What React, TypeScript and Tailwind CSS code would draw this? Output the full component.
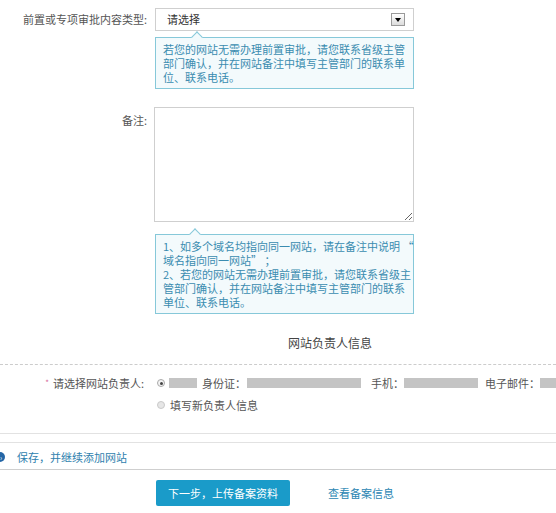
import React from "react";

const Tip = ({ lines, arrowLeft }: { lines: string[]; arrowLeft: string }) => (
  <div className="relative ml-[155px] w-[259px] border border-[#86c8d9] bg-[#f3fafc] pl-[7px] pr-[6px] pt-[4px] pb-[4px] text-[#3a8cb0] leading-[14px]">
    <span className={`absolute -top-[5px] ${arrowLeft} h-[8px] w-[8px] rotate-45 border-l border-t border-[#86c8d9] bg-[#f3fafc]`} />
    <p className="relative whitespace-nowrap">
      {lines.map((l, i) => (
        <React.Fragment key={i}>
          {i > 0 && <br />}
          {l}
        </React.Fragment>
      ))}
    </p>
  </div>
);

const Radio = ({ checked }: { checked?: boolean }) =>
  checked ? (
    <span className="flex h-[8px] w-[8px] items-center justify-center rounded-full border border-[#a9a9a9] bg-[#f4f4f4]">
      <span className="block h-[3px] w-[3px] rounded-full bg-[#444]" />
    </span>
  ) : (
    <span className="block h-[8px] w-[8px] rounded-full border border-[#c9c9c9] bg-[#e6e6e6]" />
  );

export default function App() {
  return (
    <div
      className="min-h-[513px] w-full overflow-hidden bg-white text-[11px] text-[#555]"
      style={{ fontFamily: '"Noto Sans CJK SC", "Liberation Sans", sans-serif' }}
    >
      {/* 前置审批类型 */}
      <div className="mt-[8px] flex">
        <div className="w-[147px] text-right leading-[23px]">前置或专项审批内容类型:</div>
        <div className="ml-[8px] flex h-[23px] w-[259px] items-center justify-between border border-[#cfcfcf] bg-white pl-[11px] pr-[8px]">
          <span className="text-[#333]">请选择</span>
          <span className="flex h-[13px] w-[14px] items-center justify-center border border-[#9a9a9a] bg-gradient-to-b from-white to-[#dcdcdc]">
            <span className="h-0 w-0 border-x-[3px] border-t-[4px] border-x-transparent border-t-black" />
          </span>
        </div>
      </div>

      <div className="mt-[6px]">
        <Tip
          arrowLeft="left-[37px]"
          lines={[
            "若您的网站无需办理前置审批，请您联系省级主管",
            "部门确认，并在网站备注中填写主管部门的联系单",
            "位、联系电话。",
          ]}
        />
      </div>

      {/* 备注 */}
      <div className="mt-[18px] flex">
        <div className="w-[147px] pt-[6px] text-right leading-[14px]">备注:</div>
        <textarea className="ml-[7px] h-[115px] w-[260px] border border-[#cfcfcf] bg-white outline-none" />
      </div>

      <div className="mt-[12px]">
        <Tip
          arrowLeft="left-[35px]"
          lines={[
            "1、如多个域名均指向同一网站，请在备注中说明 “",
            "域名指向同一网站” ；",
            "2、若您的网站无需办理前置审批，请您联系省级主",
            "管部门确认，并在网站备注中填写主管部门的联系",
            "单位、联系电话。",
          ]}
        />
      </div>

      {/* 网站负责人信息 */}
      <div className="mt-[21px] pl-[288px] text-[12px] leading-[16px] text-[#444]">网站负责人信息</div>
      <div className="mt-[13px] border-t border-dashed border-[#cccccc]" />

      <div className="mt-[10px] flex items-center whitespace-nowrap leading-[16px]">
        <div className="flex w-[144px] shrink-0 items-center justify-end">
          <span className="mr-[4px] text-[8px] text-[#d4679a]">*</span>
          请选择网站负责人:
        </div>
        <span className="ml-[13px] shrink-0">
          <Radio checked />
        </span>
        <span className="ml-[4px] h-[10px] w-[28px] shrink-0 bg-[#c4c4c4]" />
        <span className="ml-[5px] shrink-0">身份证：</span>
        <span className="ml-[1px] h-[10px] w-[114px] shrink-0 bg-[#c4c4c4]" />
        <span className="ml-[10px] shrink-0">手机：</span>
        <span className="h-[10px] w-[74px] shrink-0 bg-[#c4c4c4]" />
        <span className="ml-[7px] shrink-0">电子邮件：</span>
        <span className="h-[10px] w-[40px] shrink-0 bg-[#c4c4c4]" />
      </div>

      <div className="mt-[6px] flex items-center leading-[16px]">
        <span className="ml-[157px]">
          <Radio />
        </span>
        <span className="ml-[5px]">填写新负责人信息</span>
      </div>

      <div className="mt-[20px] border-t border-[#e2e2e2]" />
      <div className="mt-[8px] border-t border-[#e2e2e2]" />

      <div className="mt-[6px] flex items-center leading-[16px]">
        <span className="-ml-[5px] flex h-[10px] w-[10px] items-center justify-center rounded-full bg-[#2466a6]">
          <span className="ml-[2px] text-[7px] leading-none text-white">›</span>
        </span>
        <span className="ml-[12px] text-[#2f7fae]">保存，并继续添加网站</span>
      </div>
      <div className="mt-[4px] border-t border-[#cfcfcf]" />

      <div className="mt-[10px] flex items-center">
        <button className="ml-[156px] h-[26px] w-[134px] rounded-[2px] bg-[#1a9bc9] text-[11px] text-white">
          下一步，上传备案资料
        </button>
        <a className="ml-[38px] text-[11px] text-[#2b86b3]">查看备案信息</a>
      </div>
    </div>
  );
}
